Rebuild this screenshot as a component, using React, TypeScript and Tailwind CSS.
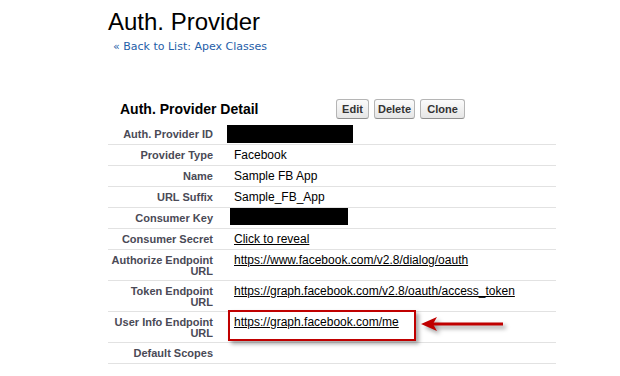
import React from "react";

type Row = {
  label: React.ReactNode;
  value?: React.ReactNode;
  tall?: boolean;
};

const rows: Row[] = [
  {
    label: "Auth. Provider ID",
    value: <div className="-mt-[4px] -ml-[7px] h-[18px] w-[126px] bg-black" />,
  },
  { label: "Provider Type", value: "Facebook" },
  { label: "Name", value: "Sample FB App" },
  { label: "URL Suffix", value: "Sample_FB_App" },
  {
    label: "Consumer Key",
    value: <div className="-mt-[5px] -ml-[4px] h-[17px] w-[118px] bg-black" />,
  },
  { label: "Consumer Secret", value: <a className="underline">Click to reveal</a> },
  {
    label: (
      <>
        Authorize Endpoint
        <br />
        URL
      </>
    ),
    value: <a className="underline">https://www.facebook.com/v2.8/dialog/oauth</a>,
    tall: true,
  },
  {
    label: (
      <>
        Token Endpoint
        <br />
        URL
      </>
    ),
    value: <a className="underline">https://graph.facebook.com/v2.8/oauth/access_token</a>,
    tall: true,
  },
  {
    label: (
      <>
        User Info Endpoint
        <br />
        URL
      </>
    ),
    value: <a className="underline">https://graph.facebook.com/me</a>,
    tall: true,
  },
  { label: "Default Scopes" },
];

const Btn = ({ label, w }: { label: string; w: string }) => (
  <button
    type="button"
    className={[
      "h-[20px] rounded-[3px] border border-[#b5b5b5] border-b-[#8f8f8f]",
      "bg-gradient-to-b from-[#fbfbfb] to-[#e6e6e6] text-[11px] font-bold text-[#333]",
      "leading-[18px] text-center",
      w,
    ].join(" ")}
  >
    {label}
  </button>
);

export default function App() {
  return (
    <div className="relative h-[376px] w-[620px] overflow-hidden bg-white font-['Liberation_Sans',Arial,sans-serif] text-black">
      <div className="pl-[108px] pt-[8px]">
        {/* page title */}
        <h1 className="text-[24px] leading-[28px] font-normal text-black">Auth. Provider</h1>
        <div className="ml-[5px] mt-[4px] font-['DejaVu_Sans',Verdana,sans-serif] text-[11px] leading-[14px] text-[#1f5ea8]">
          « Back to List: Apex Classes
        </div>

        {/* detail block */}
        <div className="mt-[45px] w-[448px]">
          <div className="flex h-[20px] items-center">
            <div className="w-[228px] pl-[12px] text-[14px] font-bold leading-[20px] text-black">
              Auth. Provider Detail
            </div>
            <div className="flex gap-[5px]">
              <Btn label="Edit" w="w-[33px]" />
              <Btn label="Delete" w="w-[41px]" />
              <Btn label="Clone" w="w-[45px]" />
            </div>
          </div>

          <div className="mt-[5px]">
            {rows.map((r, i) => (
              <div
                key={i}
                className={[
                  "flex border-b border-[#e2e2e2] pt-[5px]",
                  r.tall ? "h-[31px]" : "h-[21px]",
                ].join(" ")}
              >
                <div className="w-[114px] shrink-0 whitespace-nowrap pr-[9px] text-right text-[11px] font-bold leading-[11px] text-[#4a4a56]">
                  {r.label}
                </div>
                <div className="pl-[12px] text-[12px] leading-[11px] whitespace-nowrap text-black">
                  {r.value}
                </div>
              </div>
            ))}
          </div>
        </div>
      </div>

      {/* annotation: highlight box */}
      <div className="absolute left-[228px] top-[310px] h-[31px] w-[188px] border-2 border-[#c00000] shadow-[3px_3px_4px_rgba(0,0,0,0.35)]" />

      {/* annotation: arrow */}
      <svg
        className="absolute left-[418px] top-[314px] drop-shadow-[3px_3px_2px_rgba(0,0,0,0.4)]"
        width="92"
        height="22"
        viewBox="0 0 92 22"
      >
        <rect x="14" y="8.5" width="71" height="3" fill="#c00000" />
        <polygon points="3,10 19,3 15,10 19,17" fill="#c00000" />
      </svg>
    </div>
  );
}
